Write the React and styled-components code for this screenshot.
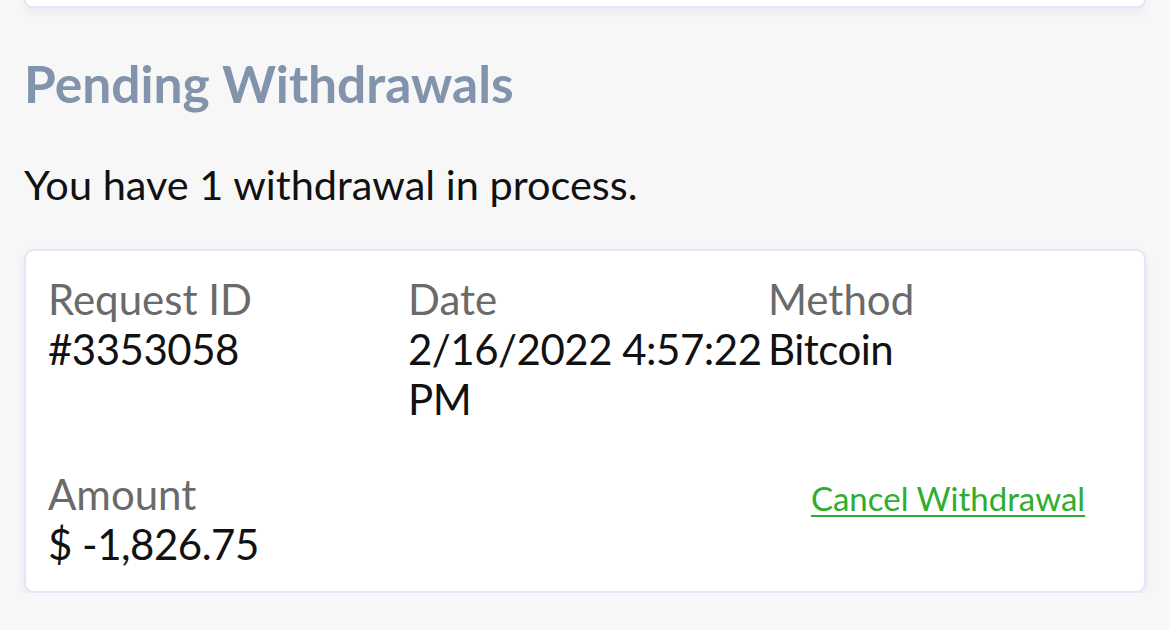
import React from 'react';
import styled, { createGlobalStyle } from 'styled-components';

const GlobalStyle = createGlobalStyle`
  html, body {
    margin: 0;
    padding: 0;
    background: #f7f7f7;
    font-family: Lato, "Open Sans", sans-serif;
  }
`;

const Page = styled.div`
  padding: 0 24px;
  display: flex;
  flex-direction: column;
`;

const CardEdge = styled.div`
  height: 6px;
  background: #fff;
  border: 2px solid #e3e6f6;
  border-top: none;
  border-radius: 0 0 10px 10px;
  box-shadow: 0 4px 8px rgba(60, 70, 110, 0.08);
`;

const Heading = styled.h2`
  margin: 44px 0 0;
  font-size: 51.5px;
  font-weight: 700;
  line-height: normal;
  color: #8194ac;
`;

const Intro = styled.p`
  margin: 45px 0 0;
  font-size: 41.5px;
  line-height: normal;
  color: #111;
`;

const Card = styled.div`
  margin-top: 40px;
  background: #fff;
  border: 2px solid #e3e6f6;
  border-radius: 10px;
  box-shadow: 0 4px 8px rgba(60, 70, 110, 0.08);
  padding: 23px 22px 22px;
  display: grid;
  grid-template-columns: repeat(3, 360px);
  row-gap: 45px;
  font-size: 42px;
  line-height: normal;
`;

const Field = styled.div`
  display: flex;
  flex-direction: column;
`;

const Label = styled.span`
  color: #6a6a6a;
`;

const Value = styled.span`
  color: #111;
  letter-spacing: -0.5px;
`;

const Action = styled.div`
  grid-column: ${p => p.col};
  display: flex;
  justify-content: center;
  padding-top: ${p => p.offset}px;
`;

const CancelLink = styled.a`
  font-size: 33px;
  color: #2eae2e;
  text-decoration: underline;
  text-underline-offset: 4px;
  text-decoration-thickness: 2px;
  cursor: pointer;
`;

const fields = [
  { label: 'Request ID', value: '#3353058' },
  { label: 'Date', value: '2/16/2022 4:57:22 PM' },
  { label: 'Method', value: 'Bitcoin' },
  { label: 'Amount', value: '$ -1,826.75' },
];

export default function App() {
  return (
    <>
      <GlobalStyle />
      <Page>
        <CardEdge />
        <Heading>Pending Withdrawals</Heading>
        <Intro>You have 1 withdrawal in process.</Intro>
        <Card>
          {fields.map(f => (
            <Field key={f.label}>
              <Label>{f.label}</Label>
              <Value>{f.value}</Value>
            </Field>
          ))}
          <Action col={3} offset={9}>
            <CancelLink>Cancel Withdrawal</CancelLink>
          </Action>
        </Card>
      </Page>
    </>
  );
}
